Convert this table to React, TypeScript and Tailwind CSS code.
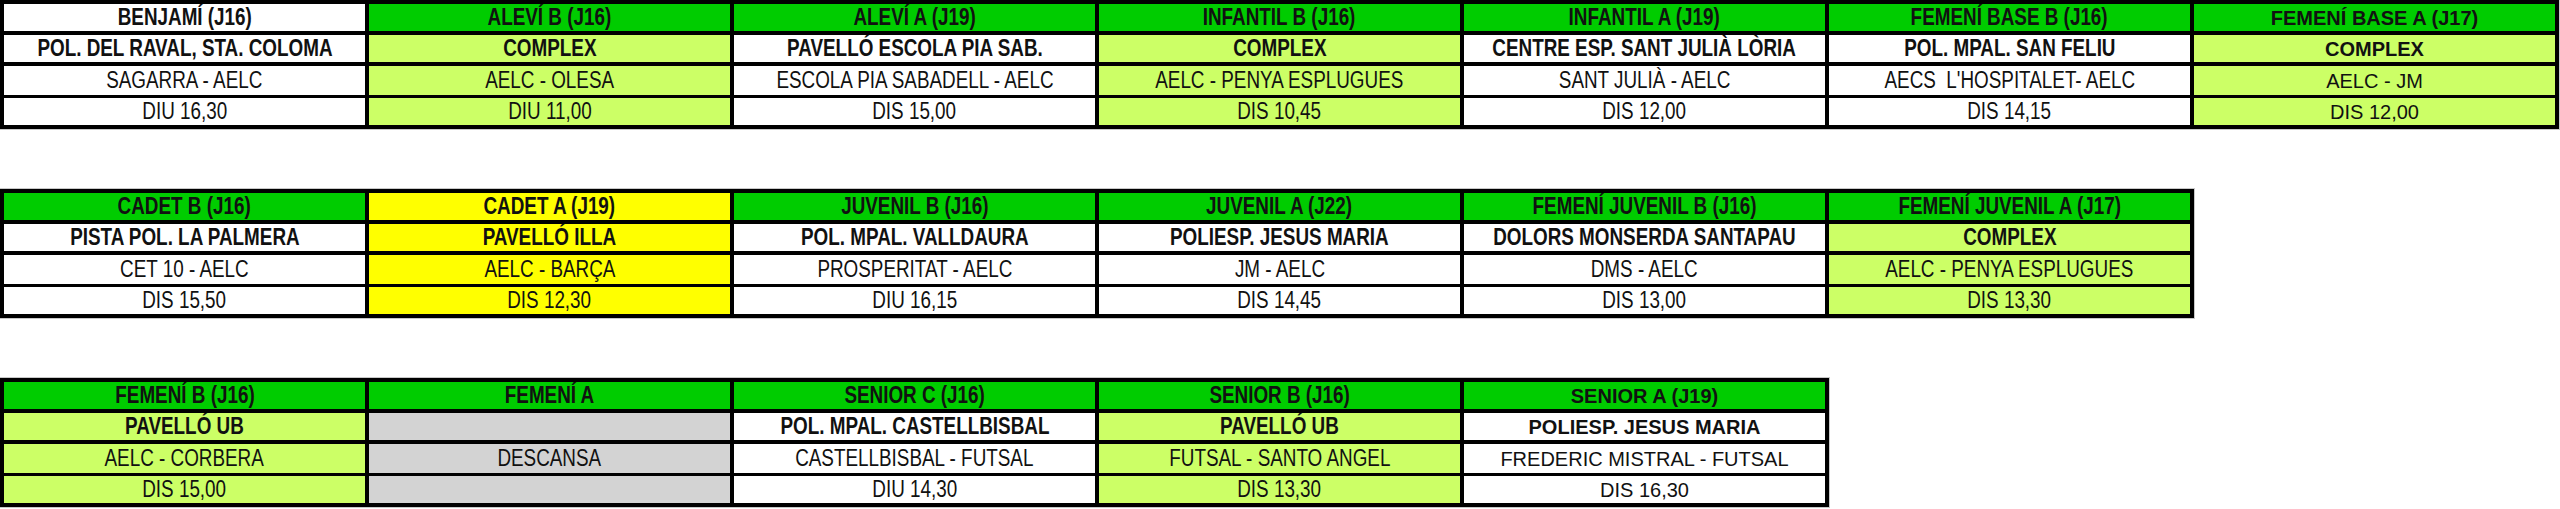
type Fill = 'white' | 'green' | 'lime' | 'yellow' | 'gray';

interface Col {
  head: string;
  headFill: Fill;
  fill: Fill;
  venue: string;
  match: string;
  time: string;
  wide?: boolean;
}

const FILL: Record<Fill, string> = {
  white: 'bg-white',
  green: 'bg-[#00cc00]',
  lime: 'bg-[#ccff66]',
  yellow: 'bg-[#ffff00]',
  gray: 'bg-[#d3d3d3]',
};

const TABLES: Col[][] = [
  [
    { head: 'BENJAMÍ (J16)', headFill: 'white', fill: 'white', venue: 'POL. DEL RAVAL, STA. COLOMA', match: 'SAGARRA - AELC', time: 'DIU 16,30' },
    { head: 'ALEVÍ B (J16)', headFill: 'green', fill: 'lime', venue: 'COMPLEX', match: 'AELC - OLESA', time: 'DIU 11,00' },
    { head: 'ALEVÍ A (J19)', headFill: 'green', fill: 'white', venue: 'PAVELLÓ ESCOLA PIA SAB.', match: 'ESCOLA PIA SABADELL - AELC', time: 'DIS 15,00' },
    { head: 'INFANTIL B (J16)', headFill: 'green', fill: 'lime', venue: 'COMPLEX', match: 'AELC - PENYA ESPLUGUES', time: 'DIS 10,45' },
    { head: 'INFANTIL A (J19)', headFill: 'green', fill: 'white', venue: 'CENTRE ESP. SANT JULIÀ LÒRIA', match: 'SANT JULIÀ - AELC', time: 'DIS 12,00' },
    { head: 'FEMENÍ BASE B (J16)', headFill: 'green', fill: 'white', venue: 'POL. MPAL. SAN FELIU', match: "AECS  L'HOSPITALET- AELC", time: 'DIS 14,15' },
    { head: 'FEMENÍ BASE A (J17)', headFill: 'green', fill: 'lime', venue: 'COMPLEX', match: 'AELC - JM', time: 'DIS 12,00', wide: true },
  ],
  [
    { head: 'CADET B (J16)', headFill: 'green', fill: 'white', venue: 'PISTA POL. LA PALMERA', match: 'CET 10 - AELC', time: 'DIS 15,50' },
    { head: 'CADET A (J19)', headFill: 'yellow', fill: 'yellow', venue: 'PAVELLÓ ILLA', match: 'AELC - BARÇA', time: 'DIS 12,30' },
    { head: 'JUVENIL B (J16)', headFill: 'green', fill: 'white', venue: 'POL. MPAL. VALLDAURA', match: 'PROSPERITAT - AELC', time: 'DIU 16,15' },
    { head: 'JUVENIL A (J22)', headFill: 'green', fill: 'white', venue: 'POLIESP. JESUS MARIA', match: 'JM - AELC', time: 'DIS 14,45' },
    { head: 'FEMENÍ JUVENIL B (J16)', headFill: 'green', fill: 'white', venue: 'DOLORS MONSERDA SANTAPAU', match: 'DMS - AELC', time: 'DIS 13,00' },
    { head: 'FEMENÍ JUVENIL A (J17)', headFill: 'green', fill: 'lime', venue: 'COMPLEX', match: 'AELC - PENYA ESPLUGUES', time: 'DIS 13,30' },
  ],
  [
    { head: 'FEMENÍ B (J16)', headFill: 'green', fill: 'lime', venue: 'PAVELLÓ UB', match: 'AELC - CORBERA', time: 'DIS 15,00' },
    { head: 'FEMENÍ A', headFill: 'green', fill: 'gray', venue: '', match: 'DESCANSA', time: '' },
    { head: 'SENIOR C (J16)', headFill: 'green', fill: 'white', venue: 'POL. MPAL. CASTELLBISBAL', match: 'CASTELLBISBAL - FUTSAL', time: 'DIU 14,30' },
    { head: 'SENIOR B (J16)', headFill: 'green', fill: 'lime', venue: 'PAVELLÓ UB', match: 'FUTSAL - SANTO ANGEL', time: 'DIS 13,30' },
    { head: 'SENIOR A (J19)', headFill: 'green', fill: 'white', venue: 'POLIESP. JESUS MARIA', match: 'FREDERIC MISTRAL - FUTSAL', time: 'DIS 16,30', wide: true },
  ],
];

// narrow columns mimic Arial Narrow: larger type squeezed horizontally
function Cell({ text, fill, bold, wide, h }: { text: string; fill: Fill; bold?: boolean; wide?: boolean; h: string }) {
  return (
    <div className={`${FILL[fill]} ${h} flex items-center justify-center overflow-hidden whitespace-pre`}>
      <span
        className={`inline-block leading-none text-[#111] ${bold ? 'font-bold' : 'font-normal'} ${
          wide ? 'text-[20px]' : 'text-[23px] scale-x-[0.82]'
        }`}
      >
        {text}
      </span>
    </div>
  );
}

function Table({ cols }: { cols: Col[] }) {
  const rows: { key: keyof Col; bold: boolean; h: string; gap: string }[] = [
    { key: 'head', bold: true, h: 'h-[27px]', gap: '' },
    { key: 'venue', bold: true, h: 'h-[27px]', gap: 'mt-1' },
    { key: 'match', bold: false, h: 'h-[29px]', gap: 'mt-1' },
    { key: 'time', bold: false, h: 'h-[27px]', gap: 'mt-[3px]' },
  ];
  return (
    <div className="w-fit bg-black p-1 outline outline-1 outline-[#c8c8c8]">
      {rows.map((r) => (
        <div key={r.key} className={`flex gap-1 ${r.gap}`}>
          {cols.map((c) => (
            <div key={c.head} className="w-[361px]">
              <Cell
                text={c[r.key] as string}
                fill={r.key === 'head' ? c.headFill : c.fill}
                bold={r.bold}
                wide={c.wide}
                h={r.h}
              />
            </div>
          ))}
        </div>
      ))}
    </div>
  );
}

export default function App() {
  return (
    <div className="flex h-[509px] w-[2560px] flex-col gap-[60px] bg-white font-['Liberation_Sans',Arial,sans-serif]">
      {TABLES.map((t, i) => (
        <Table key={i} cols={t} />
      ))}
    </div>
  );
}
